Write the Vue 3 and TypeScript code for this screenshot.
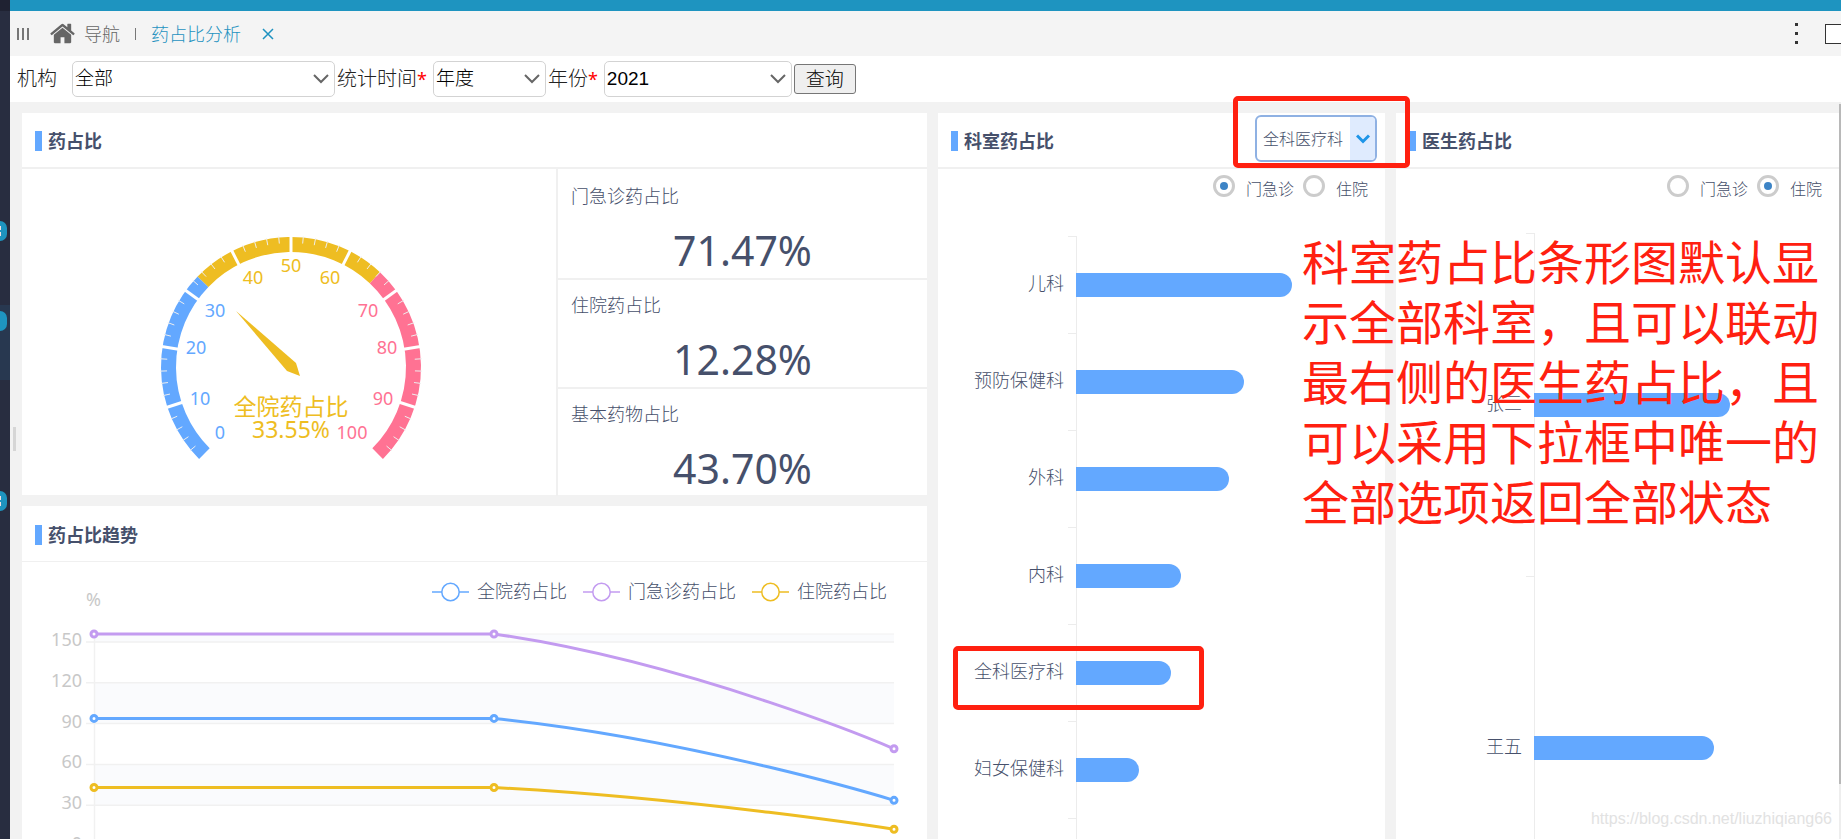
<script setup lang="ts">
import { ref } from 'vue'

interface BarItem { name: string; percent: number; marked?: boolean }
interface Series { name: string; color: string; values: number[] }

const org = ref('全部')
const period = ref('年度')
const year = ref('2021')
const dept = ref('全科医疗科')
const deptKind = ref('out')
const doctorKind = ref('in')

const stats = [
  { label: '门急诊药占比', value: '71.47%' },
  { label: '住院药占比', value: '12.28%' },
  { label: '基本药物占比', value: '43.70%' },
]

const depts: BarItem[] = [
  { name: '儿科', percent: 70 },
  { name: '预防保健科', percent: 54.5 },
  { name: '外科', percent: 49.5 },
  { name: '内科', percent: 34 },
  { name: '全科医疗科', percent: 30.6, marked: true },
  { name: '妇女保健科', percent: 20.4 },
]
const doctors: BarItem[] = [
  { name: '张三', percent: 64.2 },
  { name: '王五', percent: 59 },
]

// Gauge: 0 sits at 225 degrees, 100 at -45 degrees
const cx = 152
const cy = 198
const outer = 130
const inner = 115
const at = (value: number, r: number) => {
  const a = ((225 - value * 2.7) * Math.PI) / 180
  return { x: cx + r * Math.cos(a), y: cy - r * Math.sin(a) }
}
const arc = (from: number, to: number) => {
  const r = (outer + inner) / 2
  const p = at(from, r)
  const q = at(to, r)
  return `M${p.x} ${p.y}A${r} ${r} 0 0 1 ${q.x} ${q.y}`
}
const arcs = [
  { d: arc(0, 33), color: '#63a8ff' },
  { d: arc(66, 100), color: '#ff7293' },
  { d: arc(33, 66), color: '#eebd22' },
]
const line = (v: number, r1: number, r2: number) => {
  const p = at(v, r1)
  const q = at(v, r2)
  return `M${p.x} ${p.y}L${q.x} ${q.y}`
}
const majors = Array.from({ length: 9 }, (_, i) => line((i + 1) * 10, inner - 1, outer + 1))
const minors = Array.from({ length: 50 }, (_, i) => i * 2)
  .filter((v) => v % 10 !== 0)
  .map((v) => line(v, outer - 6, outer + 1))
const gaugeLabels = [
  [0, -71, 66], [10, -91, 32], [20, -95, -19], [30, -76, -56], [40, -38, -89], [50, 0, -101],
  [60, 39, -89], [70, 77, -56], [80, 96, -19], [90, 92, 32], [100, 61, 66],
].map(([value, dx, dy]) => ({
  value,
  x: cx + dx,
  y: cy + dy,
  color: value < 33 ? '#63a8ff' : value < 66 ? '#eebd22' : '#ff7293',
}))

// Trend chart
const xs = [72, 472, 872]
const yOf = (v: number) => 221 - v * 1.36
const series: Series[] = [
  { name: '全院药占比', color: '#63a8ff', values: [93.8, 93.8, 33.55] },
  { name: '门急诊药占比', color: '#c39bf0', values: [155.9, 155.9, 71.47] },
  { name: '住院药占比', color: '#eebd22', values: [43, 43, 12.28] },
]
const curve = (v: number[]) => {
  const [a, b, c] = v.map(yOf)
  return `M${xs[0]} ${a}L${xs[1]} ${b}C${xs[1] + 200} ${b + (c - b) / 4} ${xs[2]} ${c} ${xs[2]} ${c}`
}
const ticks = [150, 120, 90, 60, 30, 0]
const bands = [[156, 150], [120, 90], [60, 30]]
</script>

<template>
  <div class="page">
    <aside class="side">
      <div class="side-top"></div>
      <div class="side-active"></div>
      <span class="dot first"><i></i><i></i></span>
      <span class="dot second"></span>
      <span class="dot third"><i></i><i></i></span>
    </aside>

    <div class="main">
      <div class="topbar"></div>
      <nav class="tabs">
        <button class="icon-btn grip" aria-label="菜单"><i></i><i></i><i></i></button>
        <a class="home" href="#">
          <svg width="27" height="27" viewBox="0 0 1792 1792" fill="#666"><path d="M1472 992v480q0 26-19 45t-45 19h-384v-384h-256v384h-384q-26 0-45-19t-19-45v-480q0-1 .5-3t.5-3l575-474 575 474q1 2 1 6zm223-69l-62 74q-8 9-21 11h-3q-13 0-21-7l-692-577-692 577q-12 8-24 7-13-2-21-11l-62-74q-8-10-7-23.5t11-21.5l719-599q32-26 76-26t76 26l244 204v-195q0-14 9-23t23-9h192q14 0 23 9t9 23v408l219 182q10 8 11 21.5t-7 23.5z" /></svg>
          <span>导航</span>
        </a>
        <i class="sep"></i>
        <a class="current" href="#">药占比分析</a>
        <button class="icon-btn close" aria-label="关闭">
          <svg width="12" height="12" viewBox="0 0 12 12" fill="none" stroke="#1e92c0" stroke-width="1.5"><path d="M1 1l10 10M11 1L1 11" /></svg>
        </button>
        <button class="icon-btn more" aria-label="更多"><i></i><i></i><i></i></button>
        <button class="icon-btn max" aria-label="最大化"></button>
      </nav>

      <form class="filters" @submit.prevent>
        <label class="org-label" for="org">机构</label>
        <span class="select org">
          <select id="org" v-model="org"><option>全部</option></select>
          <svg width="16" height="10" viewBox="0 0 16 10"><path d="M1 1l7 7 7-7" /></svg>
        </span>
        <label for="period">统计时间<b>*</b></label>
        <span class="select period">
          <select id="period" v-model="period"><option>年度</option></select>
          <svg width="16" height="10" viewBox="0 0 16 10"><path d="M1 1l7 7 7-7" /></svg>
        </span>
        <label for="year">年份<b>*</b></label>
        <span class="select year">
          <select id="year" v-model="year"><option>2021</option></select>
          <svg width="16" height="10" viewBox="0 0 16 10"><path d="M1 1l7 7 7-7" /></svg>
        </span>
        <button class="query" type="submit">查询</button>
      </form>

      <main class="board">
        <i class="splitter"></i>
        <div class="left">
          <section class="card">
            <header><h2>药占比</h2></header>
            <div class="overview">
              <div class="gauge">
                <svg width="300" height="326" viewBox="0 0 300 326">
                  <path v-for="a in arcs" :key="a.d" :d="a.d" :stroke="a.color" stroke-width="15" fill="none" />
                  <path v-for="d in minors" :key="d" :d="d" stroke="#eee" stroke-width="1" />
                  <path v-for="d in majors" :key="d" :d="d" stroke="#fff" stroke-width="3" />
                  <text v-for="l in gaugeLabels" :key="l.value" :x="l.x" :y="l.y + 6" :fill="l.color" font-size="18" text-anchor="middle">{{ l.value }}</text>
                  <path :transform="`translate(${cx} ${cy})`" d="M-55-56L5-4 9 9-4 4Z" fill="#eebd22" />
                  <text :x="cx" y="246" fill="#eebd22" font-size="23" text-anchor="middle">全院药占比</text>
                  <text :x="cx" y="269" fill="#eebd22" font-size="23" text-anchor="middle">33.55%</text>
                </svg>
              </div>
              <div class="stats">
                <div v-for="s in stats" :key="s.label" class="stat">
                  <span>{{ s.label }}</span>
                  <strong>{{ s.value }}</strong>
                </div>
              </div>
            </div>
          </section>

          <section class="card trend">
            <header><h2>药占比趋势</h2></header>
            <div class="trend-head">
              <span class="unit">%</span>
              <ul class="legend">
                <li v-for="s in series" :key="s.name">
                  <svg width="37" height="20" viewBox="0 0 37 20" :stroke="s.color" stroke-width="1.5" fill="#fff"><path d="M0 10h37" /><circle cx="18.5" cy="10" r="8.7" /></svg>
                  <span>{{ s.name }}</span>
                </li>
              </ul>
            </div>
            <svg class="plot" viewBox="0 0 905 240">
              <rect v-for="b in bands" :key="b[0]" x="72" width="800" :y="yOf(b[0])" :height="(b[0] - b[1]) * 1.36" fill="#fafbfd" />
              <path d="M72 9H872" stroke="#f1f1f1" />
              <template v-for="t in ticks" :key="t">
                <path :d="`M64 ${yOf(t)}H872`" stroke="#f1f1f1" stroke-width="1.5" />
                <text x="60" :y="yOf(t) + 4" fill="#c8c8c8" font-size="18" text-anchor="end">{{ t }}</text>
              </template>
              <path d="M72.500 9V240" stroke="#f1f1f1" stroke-width="1.5" />
              <g v-for="s in series" :key="s.name" :stroke="s.color">
                <path :d="curve(s.values)" stroke-width="3" fill="none" />
                <circle v-for="(v, i) in s.values" :key="i" :cx="xs[i]" :cy="yOf(v)" r="3" stroke-width="3" fill="#fff" />
              </g>
            </svg>
          </section>
        </div>

        <section class="card">
          <header>
            <h2>科室药占比</h2>
            <div class="picker">
              <select v-model="dept" aria-label="科室"><option>全科医疗科</option><option>全部</option></select>
              <span class="arrow"><svg width="14" height="10" viewBox="0 0 14 10"><path d="M1 1.500l6 6 6-6" fill="none" stroke="#1e95e8" stroke-width="3" /></svg></span>
              <i class="mark"></i>
            </div>
          </header>
          <div class="radios">
            <label><input v-model="deptKind" type="radio" name="dept-kind" value="out"><span>门急诊</span></label>
            <label><input v-model="deptKind" type="radio" name="dept-kind" value="in"><span>住院</span></label>
          </div>
          <div class="bars">
            <div v-for="d in depts" :key="d.name" class="bar-row">
              <span class="name">{{ d.name }}</span>
              <div class="track"><div class="bar" :style="{ width: d.percent + '%' }"></div></div>
              <i v-if="d.marked" class="mark"></i>
            </div>
            <div class="bar-row"></div>
          </div>
        </section>

        <section class="card doctor">
          <header><h2>医生药占比</h2></header>
          <div class="radios">
            <label><input v-model="doctorKind" type="radio" name="doctor-kind" value="out"><span>门急诊</span></label>
            <label><input v-model="doctorKind" type="radio" name="doctor-kind" value="in"><span>住院</span></label>
          </div>
          <div class="bars">
            <div v-for="d in doctors" :key="d.name" class="bar-row">
              <span class="name">{{ d.name }}</span>
              <div class="track"><div class="bar" :style="{ width: d.percent + '%' }"></div></div>
            </div>
          </div>
          <p class="note">科室药占比条形图默认显示全部科室，且可以联动最右侧的医生药占比，且可以采用下拉框中唯一的全部选项返回全部状态</p>
          <span class="watermark">https://blog.csdn.net/liuzhiqiang66</span>
        </section>
        <div class="scroll"><i></i></div>
      </main>
    </div>
  </div>
</template>

<style>
body { overflow: hidden; }
</style>

<style scoped>
.page, .page * { box-sizing: border-box; }
.page {
  display: flex;
  height: 100vh;
  overflow: hidden;
  background: #f2f2f2;
  color: #46506b;
  font-family: "Noto Sans", "Noto Sans CJK SC", sans-serif;
  font-weight: 300;
  font-size: 18px;
}
i { display: block; }
a { text-decoration: none; color: inherit; }
select, button, input { font: inherit; color: inherit; margin: 0; }
svg text { font-weight: 400; }
.side { position: relative; flex: none; width: 10px; background: #282d40; }
.side-top { height: 11px; background: #1f2232; }
.side-active { position: absolute; top: 305px; left: 0; width: 10px; height: 75px; background: #283850; }
.dot { position: absolute; left: 0; width: 7px; height: 20px; padding: 5px 0; border-radius: 0 7px 7px 0; background: #1e94c0; display: flex; flex-direction: column; justify-content: space-between; }
.dot i { width: 1px; height: 4px; background: #f3dfe4; }
.first { top: 221px; }
.second { top: 311px; }
.third { top: 491px; }

.main { flex: 1; min-width: 0; display: flex; flex-direction: column; }
.topbar { flex: none; height: 11px; background: #1e94c0; }
.tabs { flex: none; display: flex; align-items: center; height: 45px; padding-left: 7px; background: #f4f4f4; color: #666; line-height: 26px; overflow: hidden; }
.icon-btn { border: 0; padding: 0; background: none; display: flex; flex: none; }
.grip { gap: 3px; }
.grip i { width: 2px; height: 12px; background: #777; }
.home { display: flex; align-items: center; gap: 8px; margin-left: 20px; }
.sep { width: 1px; height: 12px; margin: 0 15px; background: #777; }
.current { color: #1e92c0; }
.close { margin-left: 21px; }
.more { flex-direction: column; gap: 6px; margin-left: auto; }
.more i { width: 3px; height: 3px; background: #333; }
.icon-btn.max { width: 21px; height: 20px; margin: 0 -5px 0 27px; border: 1px solid #333; background: #fff; }

.filters { flex: none; display: flex; align-items: center; height: 46px; padding-left: 7px; background: #fff; color: #222; font-size: 20px; line-height: 28px; }
.filters label { margin: 0 6px 0 2px; white-space: nowrap; }
.filters .org-label { margin: 0 15px 0 0; }
.filters b { color: #f00; font-weight: 400; font-size: 18px; }
.select { display: grid; align-items: center; height: 36px; }
.select > * { grid-area: 1 / 1; }
.select select { appearance: none; width: 100%; height: 36px; padding: 0 28px 0 2px; border: 1px solid #d3d3d3; border-radius: 5px; background: #fff; color: #000; font-size: 19px; font-family: "Liberation Sans", "Noto Sans CJK SC", sans-serif; }
.select svg { justify-self: end; margin-right: 6px; fill: none; stroke: #666; stroke-width: 2; pointer-events: none; }
.org { width: 263px; }
.period { width: 113px; }
.year { width: 188px; }
.query { height: 30px; margin-left: 2px; padding: 0 11px; border: 1px solid #767676; border-radius: 3px; background: #efefef; color: #000; font-size: 19px; line-height: 26px; }

.board { position: relative; flex: 1; min-height: 0; display: grid; grid-template-columns: 905fr 447fr 443fr; gap: 11px; padding: 11px 2px 0 12px; overflow: visible; }
.splitter { position: absolute; left: 3px; top: 325px; width: 3px; height: 24px; background: #d6d6d6; }
.left { min-width: 0; min-height: 0; display: flex; flex-direction: column; gap: 11px; }
.card { position: relative; min-width: 0; background: #fff; }
.card header { display: flex; align-items: center; justify-content: space-between; height: 56px; padding: 2px 8px 0 13px; border-bottom: 2px solid #f0f0f0; }
h2 { display: flex; align-items: center; gap: 6px; margin: 0; font-size: 18px; line-height: 26px; font-weight: 700; }
h2::before { content: ""; width: 7px; height: 20px; background: #63a8ff; }
.overview { display: grid; grid-template-columns: 534fr 371fr; height: 326px; }
.gauge { display: flex; justify-content: center; }
.stats { display: grid; grid-template-rows: repeat(3, 1fr); border-left: 2px solid #f0f0f0; }
.stat { display: flex; flex-direction: column; padding: 14px 0 0 13px; line-height: 26px; }
.stat + .stat { border-top: 2px solid #f0f0f0; padding-top: 12px; }
.stat strong { margin: 13px 0 0 -13px; text-align: center; font-size: 41px; line-height: 56px; font-weight: 400; }

.trend { flex: 1; min-height: 0; overflow: hidden; }
.trend header { height: 56px; border-bottom-width: 1px; }
.trend-head { display: flex; justify-content: space-between; height: 63px; padding: 15px 40px 0 64px; line-height: 26px; }
.unit { color: #c8c8c8; padding-top: 9px; font-weight: 400; }
.legend { display: flex; gap: 16px; margin: 0; padding: 0; list-style: none; }
.legend li { display: flex; align-items: center; gap: 8px; height: 30px; }
.legend span { padding-bottom: 2px; }
.plot { display: block; width: 100%; }

.picker { position: relative; display: flex; height: 47px; width: 122px; margin-bottom: 5px; border: 2px solid #8fb1e3; border-radius: 6px; background: #fff; }
.picker select { appearance: none; flex: 1; min-width: 0; padding: 0 0 0 6px; border: 0; background: none; font-size: 16px; }
.arrow { display: grid; place-items: center; width: 25px; flex: none; background: #dfebfe; border-radius: 0 4px 4px 0; pointer-events: none; }
.mark { position: absolute; border: 5px solid #ff2010; border-radius: 5px; z-index: 2; pointer-events: none; }
.picker .mark { inset: -21px -35px -8px -24px; }
.bar-row .mark { left: 15px; top: 22px; width: 251px; height: 64px; }

.radios { display: flex; justify-content: flex-end; gap: 9px; height: 67px; padding: 6px 17px 0 0; font-size: 16px; line-height: 24px; }
.doctor .radios { height: 64px; }
.radios label { display: flex; gap: 11px; align-items: center; height: 22px; }
.radios span { padding-top: 5px; }
.radios input { appearance: none; display: grid; place-items: center; width: 22px; height: 22px; border: 3px solid #ccc; border-radius: 50%; background: #fff; }
.radios input:checked::before { content: ""; width: 8px; height: 8px; border-radius: 50%; background: #3d84c6; }

.bars { position: relative; }
.bars::before { content: ""; position: absolute; left: 138px; top: 0; width: 1px; height: 100%; background: #ececec; }
.bar-row { position: relative; display: grid; grid-template-columns: 138px 1fr; align-items: center; height: 97px; }
.doctor .bar-row { height: 343px; }
.bar-row::before { content: ""; position: absolute; left: 130px; top: 0; width: 8px; height: 1px; background: #ececec; }
.name { padding: 0 12px 4px 0; text-align: right; line-height: 26px; }
.bar { height: 24px; border-radius: 0 12px 12px 0; background: #63a8ff; }
.note { position: absolute; z-index: 3; top: 119px; right: 17px; width: 520px; margin: 0; color: #ff2010; font-size: 47px; line-height: 60px; font-weight: 400; }
.watermark { position: absolute; right: 7px; top: 694px; color: #e2e2e2; font-size: 16px; line-height: 24px; font-family: "Liberation Sans", sans-serif; }
.scroll { position: absolute; right: 0; top: 0; bottom: 0; width: 2px; background: #eee; }
.scroll i { height: 680px; margin-top: 2px; background: #b8b8b8; }
</style>
